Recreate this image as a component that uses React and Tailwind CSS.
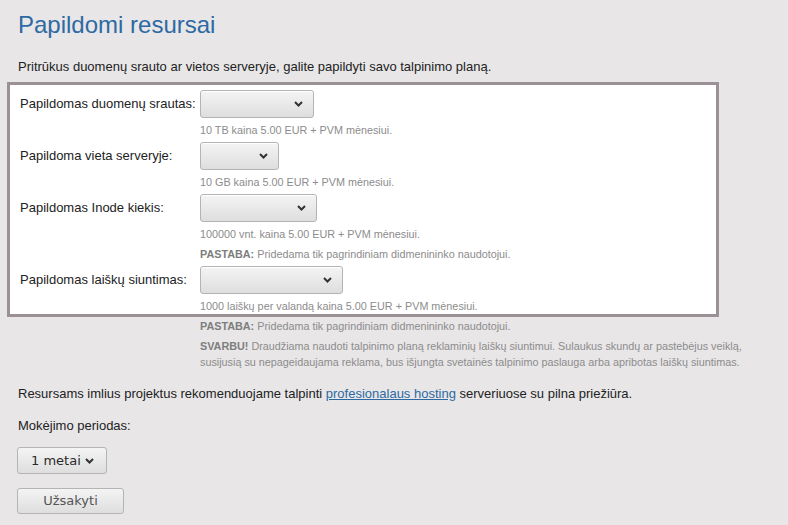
import React from 'react'

const ROWS = [
  { label: 'Papildomas duomenų srautas:', w: 'w-[114px]', notes: ['10 TB kaina 5.00 EUR + PVM mėnesiui.'] },
  { label: 'Papildoma vieta serveryje:', w: 'w-[79px]', notes: ['10 GB kaina 5.00 EUR + PVM mėnesiui.'] },
  { label: 'Papildomas Inode kiekis:', w: 'w-[117px]', notes: ['100000 vnt. kaina 5.00 EUR + PVM mėnesiui.', 'pastaba'] },
  { label: 'Papildomas laiškų siuntimas:', w: 'w-[143px]', notes: ['1000 laiškų per valandą kaina 5.00 EUR + PVM mėnesiui.'] },
]

function Chevron({ className = '' }) {
  return (
    <svg width="9" height="6" viewBox="0 0 9 6" className={className}>
      <polyline points="1,1 4.5,4.5 8,1" fill="none" stroke="#333" strokeWidth="2" />
    </svg>
  )
}

function FakeSelect({ w }) {
  return (
    <div className={`${w} h-[28px] flex items-center justify-end pr-[10px] rounded-[3px] border border-[#b4b4b4] bg-gradient-to-b from-[#f4f4f4] to-[#dedede] shadow-[inset_0_1px_0_#fff]`}>
      <Chevron />
    </div>
  )
}

function Pastaba() {
  return (
    <p className="h-4 leading-4 text-[10.8px] text-[#8c8c8c]">
      <b className="text-[#7d7d7d]">PASTABA:</b> Pridedama tik pagrindiniam didmenininko naudotojui.
    </p>
  )
}

export default function App() {
  return (
    <div className="min-h-[525px] bg-[#e8e6e7] text-[#222] text-[13px] font-['Liberation_Sans',Arial,sans-serif] pt-[10px]">
      <h1 className="pl-[18px] text-[24px] leading-[30px] text-[#2d6aa3]">Papildomi resursai</h1>

      <p className="pl-[18px] mt-[19px] leading-4">
        Pritrūkus duomenų srauto ar vietos serveryje, galite papildyti savo talpinimo planą.
      </p>

      {/* Resource box */}
      <div className="ml-[7px] mt-[7px] w-[712px] border-[3px] border-[#9c9097] bg-white pt-[5px] pl-[10px] flex flex-col gap-1">
        {ROWS.map((r, i) => (
          <div key={i} className="flex flex-col">
            <div className="flex items-center">
              <span className="w-[180px] shrink-0">{r.label}</span>
              <FakeSelect w={r.w} />
            </div>
            <div className="ml-[180px] flex flex-col gap-1 mt-1">
              {r.notes.map((n, j) =>
                n === 'pastaba' ? (
                  <Pastaba key={j} />
                ) : (
                  <p key={j} className="h-4 leading-4 text-[10.8px] text-[#8c8c8c]">{n}</p>
                )
              )}
            </div>
          </div>
        ))}
      </div>

      <div className="ml-[200px] mt-[1px] w-[560px] flex flex-col gap-1 text-[10.8px] text-[#8c8c8c]">
        <Pastaba />
        <p className="leading-4">
          <b className="text-[#7d7d7d]">SVARBU!</b> Draudžiama naudoti talpinimo planą reklaminių laiškų siuntimui. Sulaukus skundų ar pastebėjus veiklą, susijusią su nepageidaujama reklama, bus išjungta svetainės talpinimo paslauga arba apribotas laiškų siuntimas.
        </p>
      </div>

      <p className="pl-[18px] mt-[16px] leading-4">
        Resursams imlius projektus rekomenduojame talpinti{' '}
        <a href="#" className="text-[#2d6aa3] underline">profesionalaus hosting</a> serveriuose su pilna priežiūra.
      </p>

      <p className="pl-[18px] mt-[16px] leading-4">Mokėjimo periodas:</p>

      <div className="pl-[17px] mt-[13px] flex flex-col items-start gap-[14px] font-['DejaVu_Sans',sans-serif] text-[13px]">
        <div className="w-[90px] h-[27px] flex items-center pl-[13px] gap-[4px] rounded-[3px] border border-[#b4b4b4] bg-gradient-to-b from-[#f4f4f4] to-[#dedede] text-[#2a2a2a]">
          <span>1 metai</span>
          <Chevron />
        </div>
        <button className="w-[107px] h-[26px] flex items-center justify-center rounded-[3px] border border-[#b4b4b4] bg-gradient-to-b from-[#f4f4f4] to-[#dedede] text-[#555]">
          Užsakyti
        </button>
      </div>
    </div>
  )
}
